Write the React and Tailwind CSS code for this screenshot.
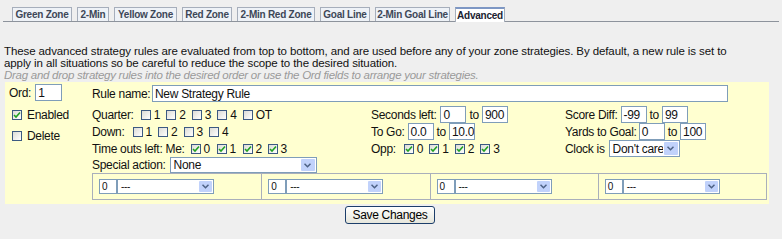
import React from 'react'

const tabs = [
  { name: 'Green Zone', w: 'w-[60px]' },
  { name: '2-Min', w: 'w-[32px]' },
  { name: 'Yellow Zone', w: 'w-[63px]' },
  { name: 'Red Zone', w: 'w-[50px]' },
  { name: '2-Min Red Zone', w: 'w-[78px]' },
  { name: 'Goal Line', w: 'w-[50px]' },
  { name: '2-Min Goal Line', w: 'w-[75px]' },
]

const Box = ({ checked }) => (
  <span className="inline-flex items-center justify-center w-[10px] h-[10px] border border-[#3c5a82] bg-gradient-to-br from-[#dcdcd6] to-white shrink-0">
    {checked && (
      <svg width="8" height="8" viewBox="0 0 8 8">
        <path d="M1 4 L3 6 L7 1.5" stroke="#21a121" strokeWidth="1.6" fill="none" />
      </svg>
    )}
  </span>
)

const Check = ({ label, checked, className = '' }) => (
  <span className={`inline-flex items-center gap-[3px] ${className}`}>
    <Box checked={checked} />
    <span>{label}</span>
  </span>
)

const Input = ({ value, w, h = 'h-[17px]', text = 'text-[12px]' }) => (
  <span
    className={`inline-flex items-center ${w} ${h} ${text} border border-[#7f9db9] bg-white pl-[2px] leading-none overflow-hidden whitespace-nowrap`}
  >
    {value}
  </span>
)

const Select = ({ value, w, h = 'h-[17px]', text = 'text-[12px]', btn = 'w-[14px]' }) => (
  <span
    className={`inline-flex items-stretch ${w} ${h} ${text} border border-[#7f9db9] bg-white leading-none whitespace-nowrap`}
  >
    <span className="flex-1 flex items-center pl-[3px] overflow-hidden">{value}</span>
    <span className={`${btn} m-px flex items-center justify-center bg-[#c1d2fb] rounded-[1px] shrink-0`}>
      <svg width="7" height="5" viewBox="0 0 7 5">
        <path d="M0.5 0.8 L3.5 3.8 L6.5 0.8" stroke="#4d6185" strokeWidth="1.5" fill="none" />
      </svg>
    </span>
  </span>
)

const To = () => <span className="mx-[3px]">to</span>

export default function App() {
  return (
    <div className="w-[782px] h-[239px] overflow-hidden bg-[#efefef] text-[#111] font-['Liberation_Sans',Arial,sans-serif]">
      <div className="flex items-end gap-[5px] mx-[3px] pl-[9px] pt-[7px] border-b border-[#8d939c]">
        {tabs.map(({ name, w }) => (
          <div
            key={name}
            className={`${w} h-[14px] flex items-center justify-center whitespace-nowrap border border-b-0 border-[#a6aebb] bg-[#eef2f7] text-[10px] font-bold tracking-[-0.25px] text-[#3d4757]`}
          >
            {name}
          </div>
        ))}
        <div className="w-[50px] h-[15px] -mb-px flex items-center justify-center border border-b-0 border-t-2 border-[#a6aebb] border-t-[#7d97c4] bg-white text-[10px] font-bold tracking-[-0.25px] text-[#1a2230]">
          Advanced
        </div>
      </div>

      <div className="mt-[23px] px-[4px] text-[11.5px] leading-[12px] tracking-[-0.1px]">
        <p>
          These advanced strategy rules are evaluated from top to bottom, and are used before any of your zone
          strategies. By default, a new rule is set to
          <br />
          apply in all situations so be careful to reduce the scope to the desired situation.
        </p>
        <p className="italic text-[#9a9a9a] tracking-[-0.27px]">
          Drag and drop strategy rules into the desired order or use the Ord fields to arrange your strategies.
        </p>
      </div>

      <div className="mx-[5px] mt-[1px] w-[764px] bg-[#ffffd0] flex text-[12px] tracking-[-0.3px] pb-[4px]">
        <div className="w-[87px] pl-[4px] pt-[2px] flex flex-col">
          <div className="flex items-center gap-[4px] h-[17px]">
            <span>Ord:</span>
            <Input value="1" w="w-[27px]" />
          </div>
          <Check label="Enabled" checked className="mt-[5px] ml-[3px] gap-[5px]" />
          <Check label="Delete" className="mt-[3px] ml-[3px] gap-[5px]" />
        </div>

        <div className="flex-1 flex flex-col">
          <div className="mt-[3px] h-[17px] flex items-center">
            <span className="w-[60px]">Rule name:</span>
            <Input value="New Strategy Rule" w="w-[576px]" />
          </div>

          <div className="mt-[4px] grid grid-cols-[279px_194px_1fr] grid-rows-[17px_17px_17px] items-center">
            <div className="flex items-center">
              <span className="mr-[7px]">Quarter:</span>
              <Check label="1" className="w-[25.5px]" />
              <Check label="2" className="w-[25.5px]" />
              <Check label="3" className="w-[25.5px]" />
              <Check label="4" className="w-[25.5px]" />
              <Check label="OT" />
            </div>
            <div className="flex items-center">
              <span className="mr-[4px]">Seconds left:</span>
              <Input value="0" w="w-[26px]" />
              <To />
              <Input value="900" w="w-[26px]" />
            </div>
            <div className="flex items-center">
              <span className="mr-[3px]">Score Diff:</span>
              <Input value="-99" w="w-[26px]" />
              <To />
              <Input value="99" w="w-[26px]" />
            </div>

            <div className="flex items-center">
              <span className="mr-[8px]">Down:</span>
              <Check label="1" className="w-[25.5px]" />
              <Check label="2" className="w-[25.5px]" />
              <Check label="3" className="w-[25.5px]" />
              <Check label="4" />
            </div>
            <div className="flex items-center">
              <span className="mr-[3px]">To Go:</span>
              <Input value="0.0" w="w-[26px]" />
              <To />
              <Input value="10.0" w="w-[26px]" />
            </div>
            <div className="flex items-center">
              <span className="mr-[2px]">Yards to Goal:</span>
              <Input value="0" w="w-[26px]" />
              <To />
              <Input value="100" w="w-[26px]" />
            </div>

            <div className="flex items-center">
              <span className="mr-[6px]">Time outs left: Me:</span>
              <Check label="0" checked className="w-[26px]" />
              <Check label="1" checked className="w-[26px]" />
              <Check label="2" checked className="w-[25px]" />
              <Check label="3" checked />
            </div>
            <div className="flex items-center">
              <span className="mr-[8px]">Opp:</span>
              <Check label="0" checked className="w-[25.5px]" />
              <Check label="1" checked className="w-[25.5px]" />
              <Check label="2" checked className="w-[25.5px]" />
              <Check label="3" checked />
            </div>
            <div className="flex items-center">
              <span className="mr-[4px]">Clock is</span>
              <Select value="Don't care" w="w-[71px]" />
            </div>
          </div>

          <div className="h-[16px] flex items-center">
            <span className="mr-[4px]">Special action:</span>
            <Select value="None" w="w-[147px]" h="h-[16px]" />
          </div>

          <div className="w-[675px] h-[27px] grid grid-cols-4 border border-[#a9afbb]">
            {[0, 1, 2, 3].map((i) => (
              <div key={i} className="flex items-center pl-[6px] border-l first:border-l-0 border-[#a9afbb]">
                <Input value="0" w="w-[18px]" h="h-[15px]" text="text-[10px]" />
                <Select value="---" w="w-[97px]" h="h-[15px]" text="text-[10px]" btn="w-[13px]" />
              </div>
            ))}
          </div>
        </div>
      </div>

      <div className="flex justify-center mt-[2px] pr-[2px]">
        <button className="w-[90px] h-[18px] rounded-[3px] border border-[#1c3e6a] bg-gradient-to-b from-white to-[#e6e6dc] text-[12px] tracking-[-0.3px] leading-none text-black">
          Save Changes
        </button>
      </div>
    </div>
  )
}
